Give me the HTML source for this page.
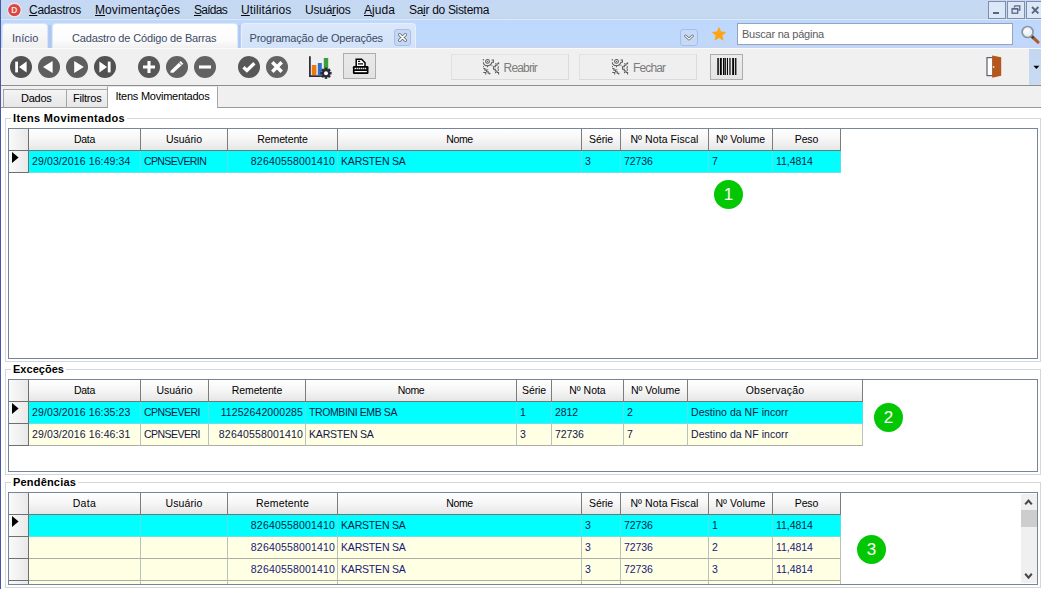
<!DOCTYPE html>
<html lang="pt-BR">
<head>
<meta charset="utf-8">
<title>Programação de Operações</title>
<style>
*{box-sizing:border-box;margin:0;padding:0}
html,body{width:1041px;height:589px;overflow:hidden;background:#fff}
body{position:relative;font-family:"Liberation Sans",sans-serif;font-size:10.5px;color:#000}
.abs{position:absolute}
.t{position:absolute;white-space:nowrap;line-height:1}
/* chrome */
#menubar{left:0;top:0;width:1041px;height:20px;background:linear-gradient(#c6d6f8 0,#c5d9f2 3px,#c4d8f0 18px,#bfd2ec 19px)}
#tabstrip{left:0;top:20px;width:1041px;height:28px;background:linear-gradient(#bdd8fc 0,#bfd9fd 20px,#c4d5f5 27px)}
#toolbar{left:0;top:48px;width:1041px;height:37px;background:#f0f0f0}
#tbline{left:0;top:85px;width:1041px;height:1px;background:#8e8e8e}
#subtabs{left:0;top:86px;width:1041px;height:21px;background:#f0f0f0}
#subline{left:0;top:107px;width:1041px;height:1px;background:#9a9a9a}
#leftedge{left:0;top:0;width:1px;height:589px;background:#4a57a6}
.menu{font-size:12px;color:#0b0b14;top:4px}
.menu u{text-decoration:underline;text-underline-offset:1px}
.tab{top:23px;height:25px;border-radius:4px 4px 0 0}
.tabtxt{font-size:11px;color:#3b4a66;top:33px}
.winbtn{top:1px;width:18px;height:18px;border:1px solid #7f8da8;background:#dce8f8}
.circ{width:22px;height:22px;top:56px}
.btn{border:1px solid #adadad;background:linear-gradient(#e9e9e9,#e2e2e2)}
.dbtn{border:1px solid #dadada;border-top-color:#e2e2e2;border-left-color:#e0e0e0;background:#efefef;top:54px;height:26px}
.dtxt{font-size:12px;letter-spacing:-0.85px;color:#7c7c7c;top:62px}
/* sub tabs */
.stab{top:89px;height:18px;border:1px solid #a6a6a6;border-bottom:none;background:linear-gradient(#f4f4f4,#e6e6e6)}
.stxt{font-size:11px;color:#000;top:93px}
/* groups */
.grp{border:1px solid #d3d6db}
.gtitle{font-weight:bold;font-size:11px;color:#000;background:#fff;padding:0 2px}
.grid{border:1px solid #788497;background:#fff;overflow:hidden}
.hc{position:absolute;height:22px;border-right:1px solid #7c7c7c;border-bottom:1px solid #747474;background:linear-gradient(#ffffff 0%,#f7f7f7 45%,#e6e6e6 100%);text-align:center;line-height:21px;font-size:10.5px;color:#000;white-space:nowrap;overflow:hidden}
.ic{position:absolute;height:22px;border-right:1px solid #6f6f6f;border-bottom:1px solid #6f6f6f;background:linear-gradient(90deg,#fafafa,#e9e9e9)}
.dc{position:absolute;height:22px;border-right:1px solid #b9c0c0;border-bottom:1px solid #adada3;line-height:21px;font-size:10.5px;color:#14144e;white-space:nowrap;overflow:hidden;padding:0 3px 0 3px}
.g3 .dc{color:#18187c}
.sel{background:#00ffff;border-right-color:#5adfe6;border-bottom-color:#6fe0e2;color:#0c1c48 !important}
.yel{background:#ffffe3}
.r{text-align:right;padding-right:2px}
.badge{width:29px;height:29px;border-radius:50%;background:#04c704;color:#fff;font-size:17px;text-align:center;line-height:29px}
</style>
</head>
<body>
<!-- bars -->
<div id="menubar" class="abs"></div>
<div id="tabstrip" class="abs"></div>
<div id="toolbar" class="abs"></div>
<div id="tbline" class="abs"></div>
<div id="subtabs" class="abs"></div>
<div id="subline" class="abs"></div>

<!--MENU-->
<svg class="abs" style="left:6px;top:2px" width="17" height="17" viewBox="0 0 17 17"><circle cx="8.4" cy="8.1" r="7.3" fill="#f3e6e6"/><circle cx="8.4" cy="8.1" r="6.2" fill="#d9454b"/><text x="8.4" y="11.2" font-family="Liberation Sans, sans-serif" font-size="8.5" font-weight="bold" fill="#fbe9c6" text-anchor="middle">D</text></svg>
<span class="t menu" style="left:29px;letter-spacing:-0.3px"><u>C</u>adastros</span>
<span class="t menu" style="left:95px;letter-spacing:0.07px"><u>M</u>ovimentações</span>
<span class="t menu" style="left:194px;letter-spacing:-0.73px"><u>S</u>aídas</span>
<span class="t menu" style="left:241px;letter-spacing:0.1px"><u>U</u>tilitários</span>
<span class="t menu" style="left:305px;letter-spacing:-0.23px">Usuá<u>r</u>ios</span>
<span class="t menu" style="left:364px;letter-spacing:0.06px"><u>A</u>juda</span>
<span class="t menu" style="left:409px;letter-spacing:-0.31px">Sa<u>i</u>r do Sistema</span>
<div class="abs winbtn" style="left:988px"><div class="abs" style="left:4px;top:10px;width:6px;height:2px;background:#586680"></div></div>
<div class="abs winbtn" style="left:1007px"><svg class="abs" style="left:3px;top:3px" width="10" height="10" viewBox="0 0 10 10"><path d="M3.5 0.8H8.8V5.2H7.2M3.5 0.8V2.6" fill="none" stroke="#586680" stroke-width="1.3"/><rect x="1.1" y="3.6" width="5.6" height="4.6" fill="none" stroke="#586680" stroke-width="1.3"/><rect x="1.1" y="3.4" width="5.6" height="1.2" fill="#586680"/></svg></div>
<div class="abs winbtn" style="left:1026px"><svg class="abs" style="left:3px;top:3px" width="10" height="10" viewBox="0 0 10 10"><path d="M2 2L8.4 8.4M8.4 2L2 8.4" stroke="#586680" stroke-width="1.9" fill="none"/></svg></div>
<!--TABS-->
<div class="abs" style="left:0;top:19px;width:1041px;height:1px;background:#dcebfb"></div>
<div class="abs" style="left:0;top:48px;width:1041px;height:1px;background:#f7fafe"></div>
<div class="abs tab" style="left:2px;width:46px;background:linear-gradient(#fbfcfe,#f3f3f4 70%,#f0f0f0);border:1px solid #d9e5f6;border-bottom:none"></div>
<div class="abs tab" style="left:52px;width:186px;background:linear-gradient(#ffffff,#fbfbfb 70%,#f0f0f0);border:1px solid #dce8f8;border-bottom:none"></div>
<div class="abs tab" style="left:241px;width:175px;background:linear-gradient(#dbe8fa,#d2e2f8);border:1px solid #e6effb;border-bottom:none"></div>
<div class="abs" style="left:48px;top:25px;width:4px;height:23px;background:linear-gradient(90deg,#b4cdf3,#a9c4ee 50%,#b9d1f6)"></div>
<div class="abs" style="left:238px;top:25px;width:3px;height:23px;background:linear-gradient(90deg,#b4cdf3,#adc7f0 50%,#b9d1f6)"></div>
<span class="t tabtxt" style="left:12px">Início</span>
<span class="t tabtxt" style="left:72px;letter-spacing:-0.15px">Cadastro de Código de Barras</span>
<span class="t tabtxt" style="left:249.5px;letter-spacing:-0.2px">Programação de Operações</span>
<div class="abs" style="left:394px;top:29px;width:17px;height:17px;border:1px solid #a9c0e4;border-radius:3px;background:#c5d8f3"><svg class="abs" style="left:2px;top:2px" width="11" height="11" viewBox="0 0 11 11"><path d="M2.6 2.6L8.4 8.4M8.4 2.6L2.6 8.4" stroke="#5f6b7d" stroke-width="3.2" stroke-linecap="round" fill="none"/><path d="M2.6 2.6L8.4 8.4M8.4 2.6L2.6 8.4" stroke="#fdfdf6" stroke-width="1.5" stroke-linecap="round" fill="none"/></svg></div>
<div class="abs" style="left:680px;top:29px;width:18px;height:17px;border:1px solid #a6bfe8;border-radius:3px;background:#c6daf8"><svg class="abs" style="left:3px;top:4px" width="10" height="8" viewBox="0 0 10 8"><path d="M1.6 1.8L5 5.2L8.4 1.8" stroke="#5f6470" stroke-width="2.6" stroke-linecap="round" stroke-linejoin="round" fill="none"/><path d="M1.6 1.8L5 5.2L8.4 1.8" stroke="#fffef4" stroke-width="1.2" stroke-linecap="round" stroke-linejoin="round" fill="none"/></svg></div>
<svg class="abs" style="left:711px;top:26px" width="16" height="16" viewBox="0 0 16 16"><path d="M8 0.8L10.1 5.6L15.3 6.1L11.4 9.6L12.5 14.7L8 12L3.5 14.7L4.6 9.6L0.7 6.1L5.9 5.6Z" fill="#ffa511"/></svg>
<div class="abs" style="left:737px;top:23px;width:276px;height:22px;border:1px solid #93a4be;background:#fff"></div>
<span class="t" style="left:742px;top:29px;font-size:11px;letter-spacing:-0.23px;color:#5c5c5c">Buscar na página</span>
<svg class="abs" style="left:1019px;top:22.5px" width="22" height="22" viewBox="0 0 22 22"><path d="M13.4 14L19 19.2" stroke="#ad5f2f" stroke-width="3.1" stroke-linecap="round"/><path d="M12.2 12.8L14.6 15.1" stroke="#3f4147" stroke-width="2.8"/><circle cx="8.6" cy="9" r="5.5" fill="#eceff2" stroke="#8b95a3" stroke-width="1.7"/><circle cx="7.8" cy="8.2" r="2.8" fill="#f8f9fa"/></svg>
<!--TOOLBAR-->
<svg class="abs circ" style="left:10px" width="22" height="22" viewBox="0 0 22 22"><circle cx="11" cy="11" r="11" fill="#515151"/><rect x="5.2" y="5.6" width="2.8" height="10.8" fill="#fff"/><path d="M9 11L16.6 5.6V16.4Z" fill="#fff"/></svg>
<svg class="abs circ" style="left:38px" width="22" height="22" viewBox="0 0 22 22"><circle cx="11" cy="11" r="11" fill="#5e5e5e"/><path d="M5 11L14.6 5V17Z" fill="#fff"/></svg>
<svg class="abs circ" style="left:66px" width="22" height="22" viewBox="0 0 22 22"><circle cx="11" cy="11" r="11" fill="#5e5e5e"/><path d="M17.8 11L8.2 5V17Z" fill="#fff"/></svg>
<svg class="abs circ" style="left:94px" width="22" height="22" viewBox="0 0 22 22"><circle cx="11" cy="11" r="11" fill="#515151"/><rect x="13.8" y="5.6" width="2.8" height="10.8" fill="#fff"/><path d="M13 11L5.4 5.6V16.4Z" fill="#fff"/></svg>
<svg class="abs circ" style="left:138px" width="22" height="22" viewBox="0 0 22 22"><circle cx="11" cy="11" r="11" fill="#585858"/><path d="M11 5V17M5 11H17" stroke="#fff" stroke-width="3.1"/></svg>
<svg class="abs circ" style="left:166px" width="22" height="22" viewBox="0 0 22 22"><circle cx="11" cy="11" r="11" fill="#626262"/><path d="M4.5 15L4.5 16.7L7.4 16.7L17.3 7.7L14.7 4.9Z" fill="#fff"/><path d="M13 6.6L15.7 9.1" stroke="#626262" stroke-width="0.8"/></svg>
<svg class="abs circ" style="left:194px" width="22" height="22" viewBox="0 0 22 22"><circle cx="11" cy="11" r="11" fill="#626262"/><path d="M5 11H17" stroke="#fff" stroke-width="3.1"/></svg>
<svg class="abs circ" style="left:238px" width="22" height="22" viewBox="0 0 22 22"><circle cx="11" cy="11" r="11" fill="#585858"/><path d="M5.5 11.2L8.9 14.4L16.4 7.2" stroke="#fff" stroke-width="3.3" fill="none" stroke-linecap="butt" stroke-linejoin="miter"/></svg>
<svg class="abs circ" style="left:266px" width="22" height="22" viewBox="0 0 22 22"><circle cx="11" cy="11" r="11" fill="#636363"/><path d="M6.3 6.3L15.7 15.7M15.7 6.3L6.3 15.7" stroke="#fff" stroke-width="3.5"/></svg>
<svg class="abs" style="left:308px;top:55px" width="26" height="26" viewBox="0 0 26 26"><path d="M1.9 1.2V21.2H14" fill="none" stroke="#30303c" stroke-width="1.8"/><rect x="3.8" y="10" width="4.6" height="10" fill="#f4760f"/><rect x="9.8" y="8" width="4" height="12" fill="#2f6fcf"/><rect x="15.8" y="3" width="4.4" height="12" fill="#3ba038"/>
<g transform="translate(18,18.2)"><g fill="#2a2a38"><circle r="4"/><rect x="-1.3" y="-5.6" width="2.6" height="11.2"/><rect x="-1.3" y="-5.6" width="2.6" height="11.2" transform="rotate(45)"/><rect x="-1.3" y="-5.6" width="2.6" height="11.2" transform="rotate(90)"/><rect x="-1.3" y="-5.6" width="2.6" height="11.2" transform="rotate(135)"/></g><circle r="2" fill="#fff"/></g></svg>
<div class="abs btn" style="left:343px;top:53px;width:33px;height:26px"><svg class="abs" style="left:8px;top:4px" width="18" height="18" viewBox="0 0 18 18"><path d="M4.2 8V1.2H9.6L13 4.8V8" fill="#fff" stroke="#000" stroke-width="1.5"/><path d="M6 3.4H8.2M6 5.8H11" stroke="#000" stroke-width="1.2"/><rect x="0.9" y="8" width="15.6" height="8" rx="1.2" fill="#000"/><path d="M2.6 10.6H14.8" stroke="#fff" stroke-width="1.5" stroke-dasharray="1.3 0.7"/><path d="M2.6 13.6H14.8" stroke="#fff" stroke-width="1.2"/></svg></div>
<div class="abs dbtn" style="left:451px;width:118px"></div>
<svg class="abs" style="left:478px;top:55px" width="24" height="24" viewBox="0 0 24 24"><g fill="none" stroke="#5c5c5c" stroke-width="1.05"><circle cx="9.5" cy="6.4" r="1.9"/><path d="M5.3 7.2Q5.5 10.6 9.5 10.8Q13.2 10.6 14 7.2H15.4V5H13.6"/><path d="M5.3 4V5.4M9.5 10.8V12.3M5 11.6H5.9"/><path d="M5.3 13.5H6.9V15.1H8.6V16.7H10.2V18.3H11.8V19.6"/><path d="M5.3 17.5H7.7V19.6M9.2 14.8H10.2"/><path d="M20.6 7.3V8.8H19V10.2H17.3V11.8H15.5V14.3H17.3V15.9H19V17.5H20.6V19.6"/><path d="M20.5 11.3Q19.3 13.5 20.5 15.8"/><path d="M17.1 8.8H18M17.1 17.6H18M13.6 10.6H14.4"/></g><circle cx="9.5" cy="6.4" r="0.55" fill="#5c5c5c"/></svg>
<span class="t dtxt" style="left:503.6px">Reabrir</span>
<div class="abs dbtn" style="left:579px;width:118px"></div>
<svg class="abs" style="left:606.5px;top:55px" width="24" height="24" viewBox="0 0 24 24"><g fill="none" stroke="#5c5c5c" stroke-width="1.05"><circle cx="9.5" cy="6.4" r="1.9"/><path d="M5.3 7.2Q5.5 10.6 9.5 10.8Q13.2 10.6 14 7.2H15.4V5H13.6"/><path d="M5.3 4V5.4M9.5 10.8V12.3M5 11.6H5.9"/><path d="M5.3 13.5H6.9V15.1H8.6V16.7H10.2V18.3H11.8V19.6"/><path d="M5.3 17.5H7.7V19.6M9.2 14.8H10.2"/><path d="M20.6 7.3V8.8H19V10.2H17.3V11.8H15.5V14.3H17.3V15.9H19V17.5H20.6V19.6"/><path d="M20.5 11.3Q19.3 13.5 20.5 15.8"/><path d="M17.1 8.8H18M17.1 17.6H18M13.6 10.6H14.4"/></g><circle cx="9.5" cy="6.4" r="0.55" fill="#5c5c5c"/></svg>
<span class="t dtxt" style="left:633px">Fechar</span>
<div class="abs btn" style="left:710px;top:54px;width:33px;height:26px;background:linear-gradient(#ececec,#e4e4e4)"><svg class="abs" style="left:6px;top:3px" width="20" height="18" viewBox="0 0 20 18"><g fill="#050505"><rect x="0.3" y="0" width="1.5" height="17"/><rect x="2.9" y="0" width="1.9" height="17"/><rect x="6" y="0" width="1.4" height="17"/><rect x="7.6" y="0" width="1.5" height="17" fill="#222"/><rect x="10" y="0" width="1" height="17"/><rect x="12.1" y="0" width="1.7" height="17" fill="#4a4a4a"/><rect x="15.2" y="0" width="1.9" height="17"/><rect x="18.1" y="0" width="1.3" height="17"/></g></svg></div>
<svg class="abs" style="left:985px;top:54px" width="18" height="25" viewBox="0 0 18 25"><rect x="2" y="3.6" width="6" height="18" fill="#fff" stroke="#5b5f6c" stroke-width="1.2"/><path d="M7.2 1.6L16.2 3.2V21.8L7.2 23.7Z" fill="#b4571c"/><circle cx="8.6" cy="13" r="0.9" fill="#f3e3c3"/></svg>
<div class="abs" style="left:1029px;top:49px;width:12px;height:36px;background:linear-gradient(#c2d6f0,#c9dbf2)"></div>
<svg class="abs" style="left:1033px;top:65px" width="7" height="5" viewBox="0 0 7 5"><path d="M0.4 0.8H6.4L3.4 4Z" fill="#000"/></svg>
<!--SUBTABS-->
<div class="abs stab" style="left:3px;width:64px"></div>
<div class="abs stab" style="left:66px;width:42px"></div>
<div class="abs" style="left:107px;top:86px;width:111px;height:22px;background:#fff;border:1px solid #a6a6a6;border-bottom:none;border-top-color:#e8e8e8"></div>
<span class="t stxt" style="left:21px;letter-spacing:-0.26px">Dados</span>
<span class="t stxt" style="left:73px;letter-spacing:-0.2px">Filtros</span>
<span class="t stxt" style="left:115.5px;top:91px;letter-spacing:-0.25px">Itens Movimentados</span>
<!--/SUBTABS-->
<!--GROUPS-->
<div class="abs grp" style="left:5px;top:118px;width:1036px;height:244px"></div>
<span class="t gtitle" style="left:11px;top:113px;letter-spacing:0.35px">Itens Movimentados</span>
<div class="abs grid" style="left:8px;top:128px;width:1030px;height:231px">
<div class="ic" style="left:0px;top:0;width:20px"></div><div class="hc" style="left:20px;top:0;width:112px"><span style="letter-spacing:-0.297px">Data</span></div><div class="hc" style="left:132px;top:0;width:87px"><span style="letter-spacing:-0.04px">Usuário</span></div><div class="hc" style="left:219px;top:0;width:110px"><span style="letter-spacing:-0.12px">Remetente</span></div><div class="hc" style="left:329px;top:0;width:244px"><span style="letter-spacing:-0.354px">Nome</span></div><div class="hc" style="left:573px;top:0;width:39px"><span style="letter-spacing:-0.123px">Série</span></div><div class="hc" style="left:612px;top:0;width:88px"><span style="letter-spacing:0.089px">Nº Nota Fiscal</span></div><div class="hc" style="left:700px;top:0;width:64px"><span style="letter-spacing:-0.04px">Nº Volume</span></div><div class="hc" style="left:764px;top:0;width:68px"><span style="letter-spacing:-0.134px">Peso</span></div>
<div class="ic" style="left:0;top:22px;width:20px"><svg style="position:absolute;left:3px;top:1.3px" width="7" height="11" viewBox="0 0 7 11"><path d="M0 0L6.6 5.5L0 11Z" fill="#000"/></svg></div><div class="dc sel" style="left:20px;top:22px;width:112px"><span style="letter-spacing:0.113px">29/03/2016 16:49:34</span></div><div class="dc sel" style="left:132px;top:22px;width:87px"><span style="letter-spacing:-0.617px">CPNSEVERIN</span></div><div class="dc sel r" style="left:219px;top:22px;width:110px"><span style="letter-spacing:0.17px">82640558001410</span></div><div class="dc sel" style="left:329px;top:22px;width:244px"><span style="letter-spacing:-0.183px">KARSTEN SA</span></div><div class="dc sel" style="left:573px;top:22px;width:39px">3</div><div class="dc sel" style="left:612px;top:22px;width:88px"><span style="letter-spacing:-0.06px">72736</span></div><div class="dc sel" style="left:700px;top:22px;width:64px">7</div><div class="dc sel" style="left:764px;top:22px;width:68px"><span style="letter-spacing:-0.055px">11,4814</span></div>
</div>
<div class="abs grp" style="left:5px;top:369px;width:1036px;height:106px"></div>
<span class="t gtitle" style="left:11px;top:364px;letter-spacing:0.03px">Exceções</span>
<div class="abs grid" style="left:8px;top:379px;width:1030px;height:93px">
<div class="ic" style="left:0px;top:0;width:20px"></div><div class="hc" style="left:20px;top:0;width:112px"><span style="letter-spacing:-0.297px">Data</span></div><div class="hc" style="left:132px;top:0;width:68px"><span style="letter-spacing:-0.04px">Usuário</span></div><div class="hc" style="left:200px;top:0;width:97px"><span style="letter-spacing:-0.12px">Remetente</span></div><div class="hc" style="left:297px;top:0;width:211px"><span style="letter-spacing:-0.354px">Nome</span></div><div class="hc" style="left:508px;top:0;width:35px"><span style="letter-spacing:-0.123px">Série</span></div><div class="hc" style="left:543px;top:0;width:72px"><span style="letter-spacing:-0.017px">Nº Nota</span></div><div class="hc" style="left:615px;top:0;width:64px"><span style="letter-spacing:-0.04px">Nº Volume</span></div><div class="hc" style="left:679px;top:0;width:175px"><span style="letter-spacing:0.188px">Observação</span></div>
<div class="ic" style="left:0;top:22px;width:20px"><svg style="position:absolute;left:3px;top:1.3px" width="7" height="11" viewBox="0 0 7 11"><path d="M0 0L6.6 5.5L0 11Z" fill="#000"/></svg></div><div class="dc sel" style="left:20px;top:22px;width:112px"><span style="letter-spacing:0.113px">29/03/2016 16:35:23</span></div><div class="dc sel" style="left:132px;top:22px;width:68px"><span style="letter-spacing:-0.543px">CPNSEVERI</span></div><div class="dc sel r" style="left:200px;top:22px;width:97px"><span style="letter-spacing:0.1px">11252642000285</span></div><div class="dc sel" style="left:297px;top:22px;width:211px"><span style="letter-spacing:-0.396px">TROMBINI EMB SA</span></div><div class="dc sel" style="left:508px;top:22px;width:35px">1</div><div class="dc sel" style="left:543px;top:22px;width:72px"><span style="letter-spacing:-0.065px">2812</span></div><div class="dc sel" style="left:615px;top:22px;width:64px">2</div><div class="dc sel" style="left:679px;top:22px;width:175px"><span style="letter-spacing:0.045px">Destino da NF incorr</span></div>
<div class="ic" style="left:0;top:44px;width:20px"></div><div class="dc yel" style="left:20px;top:44px;width:112px"><span style="letter-spacing:0.113px">29/03/2016 16:46:31</span></div><div class="dc yel" style="left:132px;top:44px;width:68px"><span style="letter-spacing:-0.543px">CPNSEVERI</span></div><div class="dc yel r" style="left:200px;top:44px;width:97px"><span style="letter-spacing:0.17px">82640558001410</span></div><div class="dc yel" style="left:297px;top:44px;width:211px"><span style="letter-spacing:-0.183px">KARSTEN SA</span></div><div class="dc yel" style="left:508px;top:44px;width:35px">3</div><div class="dc yel" style="left:543px;top:44px;width:72px"><span style="letter-spacing:-0.06px">72736</span></div><div class="dc yel" style="left:615px;top:44px;width:64px">7</div><div class="dc yel" style="left:679px;top:44px;width:175px"><span style="letter-spacing:0.045px">Destino da NF incorr</span></div>
</div>
<div class="abs grp" style="left:5px;top:482px;width:1036px;height:106px"></div>
<span class="t gtitle" style="left:11px;top:477px;letter-spacing:0.19px">Pendências</span>
<div class="abs grid g3" style="left:8px;top:492px;width:1030px;height:93px">
<div class="ic" style="left:0px;top:0;width:20px"></div><div class="hc" style="left:20px;top:0;width:112px"><span style="letter-spacing:0.38px">Data</span></div><div class="hc" style="left:132px;top:0;width:87px"><span style="letter-spacing:0.09px">Usuário</span></div><div class="hc" style="left:219px;top:0;width:110px"><span style="letter-spacing:0.16px">Remetente</span></div><div class="hc" style="left:329px;top:0;width:244px"><span style="letter-spacing:-0.354px">Nome</span></div><div class="hc" style="left:573px;top:0;width:39px"><span style="letter-spacing:-0.123px">Série</span></div><div class="hc" style="left:612px;top:0;width:88px"><span style="letter-spacing:0.089px">Nº Nota Fiscal</span></div><div class="hc" style="left:700px;top:0;width:64px"><span style="letter-spacing:0.08px">Nº Volume</span></div><div class="hc" style="left:764px;top:0;width:68px"><span style="letter-spacing:-0.134px">Peso</span></div>
<div class="ic" style="left:0;top:22px;width:20px"><svg style="position:absolute;left:3px;top:1.3px" width="7" height="11" viewBox="0 0 7 11"><path d="M0 0L6.6 5.5L0 11Z" fill="#000"/></svg></div><div class="dc sel" style="left:20px;top:22px;width:112px"></div><div class="dc sel" style="left:132px;top:22px;width:87px"></div><div class="dc sel r" style="left:219px;top:22px;width:110px"><span style="letter-spacing:0.17px">82640558001410</span></div><div class="dc sel" style="left:329px;top:22px;width:244px"><span style="letter-spacing:-0.183px">KARSTEN SA</span></div><div class="dc sel" style="left:573px;top:22px;width:39px">3</div><div class="dc sel" style="left:612px;top:22px;width:88px"><span style="letter-spacing:-0.06px">72736</span></div><div class="dc sel" style="left:700px;top:22px;width:64px">1</div><div class="dc sel" style="left:764px;top:22px;width:68px"><span style="letter-spacing:-0.055px">11,4814</span></div>
<div class="ic" style="left:0;top:44px;width:20px"></div><div class="dc yel" style="left:20px;top:44px;width:112px"></div><div class="dc yel" style="left:132px;top:44px;width:87px"></div><div class="dc yel r" style="left:219px;top:44px;width:110px"><span style="letter-spacing:0.17px">82640558001410</span></div><div class="dc yel" style="left:329px;top:44px;width:244px"><span style="letter-spacing:-0.183px">KARSTEN SA</span></div><div class="dc yel" style="left:573px;top:44px;width:39px">3</div><div class="dc yel" style="left:612px;top:44px;width:88px"><span style="letter-spacing:-0.06px">72736</span></div><div class="dc yel" style="left:700px;top:44px;width:64px">2</div><div class="dc yel" style="left:764px;top:44px;width:68px"><span style="letter-spacing:-0.055px">11,4814</span></div>
<div class="ic" style="left:0;top:66px;width:20px"></div><div class="dc yel" style="left:20px;top:66px;width:112px"></div><div class="dc yel" style="left:132px;top:66px;width:87px"></div><div class="dc yel r" style="left:219px;top:66px;width:110px"><span style="letter-spacing:0.17px">82640558001410</span></div><div class="dc yel" style="left:329px;top:66px;width:244px"><span style="letter-spacing:-0.183px">KARSTEN SA</span></div><div class="dc yel" style="left:573px;top:66px;width:39px">3</div><div class="dc yel" style="left:612px;top:66px;width:88px"><span style="letter-spacing:-0.06px">72736</span></div><div class="dc yel" style="left:700px;top:66px;width:64px">3</div><div class="dc yel" style="left:764px;top:66px;width:68px"><span style="letter-spacing:-0.055px">11,4814</span></div>
<div class="ic" style="left:0;top:88px;width:20px"></div><div class="dc yel" style="left:20px;top:88px;width:112px"></div><div class="dc yel" style="left:132px;top:88px;width:87px"></div><div class="dc yel r" style="left:219px;top:88px;width:110px"><span style="letter-spacing:0.17px">82640558001410</span></div><div class="dc yel" style="left:329px;top:88px;width:244px"><span style="letter-spacing:-0.183px">KARSTEN SA</span></div><div class="dc yel" style="left:573px;top:88px;width:39px">3</div><div class="dc yel" style="left:612px;top:88px;width:88px"><span style="letter-spacing:-0.06px">72736</span></div><div class="dc yel" style="left:700px;top:88px;width:64px">4</div><div class="dc yel" style="left:764px;top:88px;width:68px"><span style="letter-spacing:-0.055px">11,4814</span></div>
<div style="position:absolute;left:1012px;top:1px;width:16px;height:89px;background:#f0f0f0"></div><div style="position:absolute;left:1012px;top:17px;width:16px;height:17px;background:#cdcdcd"></div><svg style="position:absolute;left:1015px;top:5px" width="9" height="8" viewBox="0 0 9 8"><path d="M1.2 6.4L4.5 2.6L7.8 6.4" fill="none" stroke="#484848" stroke-width="2.1"/></svg><svg style="position:absolute;left:1015px;top:79px" width="9" height="8" viewBox="0 0 9 8"><path d="M1.2 1.8L4.5 5.6L7.8 1.8" fill="none" stroke="#484848" stroke-width="2.1"/></svg>
</div>
<div class="abs badge" style="left:714px;top:180px">1</div>
<div class="abs badge" style="left:874px;top:403px">2</div>
<div class="abs badge" style="left:857px;top:535px">3</div>
<!--/GROUPS-->

<div id="leftedge" class="abs"></div>
</body>
</html>
